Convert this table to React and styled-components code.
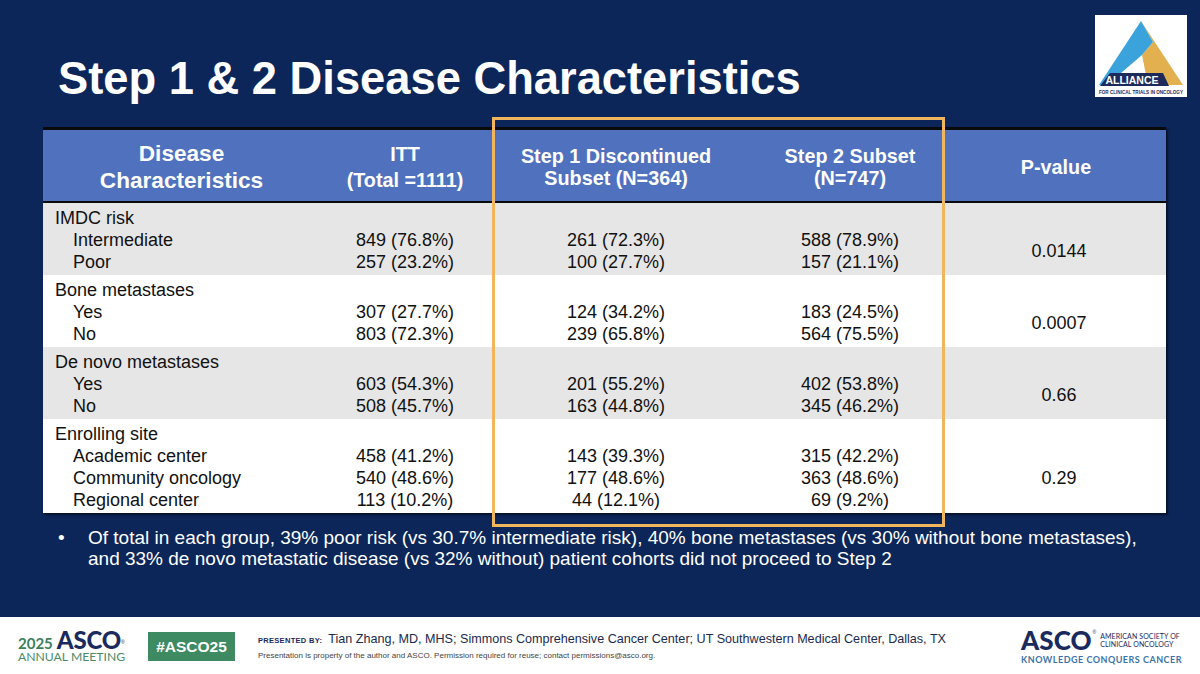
import styled, { createGlobalStyle } from "styled-components";

const GlobalStyle = createGlobalStyle`
  html, body {
    margin: 0;
    padding: 0;
    background: #0c2659;
  }
  body {
    font-family: "Liberation Sans", Arial, sans-serif;
  }
`;

const groups = [
  {
    title: "IMDC risk",
    shade: true,
    p: "0.0144",
    rows: [
      ["Intermediate", "849 (76.8%)", "261 (72.3%)", "588 (78.9%)"],
      ["Poor", "257 (23.2%)", "100 (27.7%)", "157 (21.1%)"],
    ],
  },
  {
    title: "Bone metastases",
    p: "0.0007",
    rows: [
      ["Yes", "307 (27.7%)", "124 (34.2%)", "183 (24.5%)"],
      ["No", "803 (72.3%)", "239 (65.8%)", "564 (75.5%)"],
    ],
  },
  {
    title: "De novo metastases",
    shade: true,
    p: "0.66",
    rows: [
      ["Yes", "603 (54.3%)", "201 (55.2%)", "402 (53.8%)"],
      ["No", "508 (45.7%)", "163 (44.8%)", "345 (46.2%)"],
    ],
  },
  {
    title: "Enrolling site",
    p: "0.29",
    rows: [
      ["Academic center", "458 (41.2%)", "143 (39.3%)", "315 (42.2%)"],
      ["Community oncology", "540 (48.6%)", "177 (48.6%)", "363 (48.6%)"],
      ["Regional center", "113 (10.2%)", "44 (12.1%)", "69 (9.2%)"],
    ],
  },
];

const AllianceLogo = () => (
  <LogoBox>
    <svg width="92" height="82" viewBox="0 0 92 82">
      <rect width="92" height="82" fill="#ffffff" />
      <polygon points="46,6 88,70 53,70 47,40 58,27" fill="#e3b04f" />
      <polygon points="46,6 58,27 47,40 12,70 4,70" fill="#3aa3dc" />
      <polygon points="15,58 68,58 74,71 5,71" fill="#1d2b5c" />
      <text x="37" y="69" fill="#ffffff" fontSize="10.5" fontWeight="700" textAnchor="middle" fontFamily="Liberation Sans, Arial, sans-serif">ALLIANCE</text>
      <text x="4" y="78.5" fill="#1d2b5c" fontSize="4.6" fontWeight="700" textLength="84" lengthAdjust="spacingAndGlyphs" fontFamily="Liberation Sans, Arial, sans-serif">FOR CLINICAL TRIALS IN ONCOLOGY</text>
    </svg>
  </LogoBox>
);

const App = () => {
  return (
    <Slide>
      <GlobalStyle />
      <Main>
        <Header>
          <Title>Step 1 &amp; 2 Disease Characteristics</Title>
          <AllianceLogo />
        </Header>

        <Table>
          <HeadRow>
            <HeadCell $big>Disease<br />Characteristics</HeadCell>
            <HeadCell $lh={26}>ITT<br />(Total =1111)</HeadCell>
            <HeadCell>Step 1 Discontinued<br />Subset (N=364)</HeadCell>
            <HeadCell $shift={6}>Step 2 Subset<br />(N=747)</HeadCell>
            <HeadCell>P-value</HeadCell>
          </HeadRow>
          {groups.map((g) => (
            <Group key={g.title} $shade={g.shade}>
              <GroupTitle>{g.title}</GroupTitle>
              {g.rows.map((r) => [
                <SubLabel key={r[0]}>{r[0]}</SubLabel>,
                <Value key={r[0] + "a"}>{r[1]}</Value>,
                <Value key={r[0] + "b"}>{r[2]}</Value>,
                <Value key={r[0] + "c"} $shift={6}>{r[3]}</Value>,
              ])}
              <PValue $span={g.rows.length}>{g.p}</PValue>
            </Group>
          ))}
        </Table>

        <Bullet>
          <Dot>•</Dot>
          <BulletText>
            Of total in each group, 39% poor risk (vs 30.7% intermediate risk), 40% bone metastases (vs 30% without bone metastases),
            and 33% de novo metastatic disease (vs 32% without) patient cohorts did not proceed to Step 2
          </BulletText>
        </Bullet>

        <Highlight />
      </Main>

      <Footer>
        <MeetingLogo>
          <MeetingTop>
            <Year>2025</Year>
            <AscoSmall>ASCO</AscoSmall>
            <Reg>®</Reg>
          </MeetingTop>
          <MeetingSub>ANNUAL MEETING</MeetingSub>
        </MeetingLogo>
        <Hashtag>#ASCO25</Hashtag>
        <Presenter>
          <PresenterLine>
            <PresentedBy>PRESENTED BY:</PresentedBy>
            <PresenterName>Tian Zhang, MD, MHS; Simmons Comprehensive Cancer Center; UT Southwestern Medical Center, Dallas, TX</PresenterName>
          </PresenterLine>
          <Disclaimer>Presentation is property of the author and ASCO. Permission required for reuse; contact permissions@asco.org.</Disclaimer>
        </Presenter>
        <AscoBrand>
          <AscoTop>
            <AscoBig>ASCO</AscoBig>
            <RegBig>®</RegBig>
            <Society>AMERICAN SOCIETY OF<br />CLINICAL ONCOLOGY</Society>
          </AscoTop>
          <Tagline>KNOWLEDGE CONQUERS CANCER</Tagline>
        </AscoBrand>
      </Footer>
    </Slide>
  );
};

const Slide = styled.div`
  width: 1200px;
  height: 674px;
  display: flex;
  flex-direction: column;
  overflow: hidden;
`;

const Main = styled.div`
  position: relative;
  height: 617px;
  flex-shrink: 0;
  background: #0c2659;
  display: flex;
  flex-direction: column;
`;

const Header = styled.div`
  display: flex;
  justify-content: space-between;
  align-items: flex-start;
  padding: 15px 13px 0 58px;
`;

const Title = styled.h1`
  margin: 39px 0 0;
  color: #ffffff;
  font-size: 45.3px;
  line-height: 50px;
  font-weight: 700;
`;

const LogoBox = styled.div`
  width: 92px;
  height: 82px;
  svg {
    display: block;
  }
`;

const cols = "277px 170px 252px 204px 220px";

const Table = styled.div`
  margin: 23px 0 0 43px;
  width: 1123px;
  border-top: 3px solid #0a0a0a;
  box-shadow: 2px 2px 2px rgba(0, 0, 0, 0.55);
`;

const HeadRow = styled.div`
  display: grid;
  grid-template-columns: ${cols};
  height: 71px;
  background: #4f71be;
  border-bottom: 2px solid #0a0a0a;
  align-items: center;
`;

const HeadCell = styled.div`
  text-align: center;
  color: #ffffff;
  font-weight: 700;
  font-size: ${(p) => (p.$big ? "22.6px" : "19.8px")};
  line-height: ${(p) => (p.$big ? "27px" : `${p.$lh || 22}px`)};
  padding-top: 2px;
  transform: translateX(${(p) => p.$shift || 0}px);
`;

const Group = styled.div`
  display: grid;
  grid-template-columns: ${cols};
  grid-auto-rows: 22px;
  padding: 4px 0 2px;
  background: ${(p) => (p.$shade ? "#e6e6e6" : "#ffffff")};
  font-size: 18px;
  line-height: 22px;
  color: #111111;
`;

const GroupTitle = styled.div`
  grid-column: 1 / -1;
  padding-left: 12px;
`;

const SubLabel = styled.div`
  padding-left: 30px;
`;

const Value = styled.div`
  text-align: center;
  transform: translateX(${(p) => p.$shift || 0}px);
`;

const PValue = styled.div`
  grid-column: 5;
  grid-row: 2 / span ${(p) => p.$span};
  align-self: center;
  text-align: center;
  transform: translateX(3px);
`;

const Highlight = styled.div`
  position: absolute;
  left: 492px;
  top: 117px;
  width: 447px;
  height: 404px;
  border: 3px solid #f1b65c;
  pointer-events: none;
`;

const Bullet = styled.div`
  display: grid;
  grid-template-columns: 30px 1065px;
  margin: 14px 0 0 58px;
  color: #ffffff;
  font-size: 19px;
  line-height: 21px;
`;

const Dot = styled.span``;

const BulletText = styled.p`
  margin: 0;
`;

const Footer = styled.div`
  height: 57px;
  flex-shrink: 0;
  background: #ffffff;
  display: flex;
  align-items: center;
  padding: 0 0 0 18px;
  box-sizing: border-box;
  white-space: nowrap;

  & > * {
    flex-shrink: 0;
  }
`;

const MeetingLogo = styled.div`
  display: flex;
  flex-direction: column;
  width: 112px;
  margin-top: 1px;
`;

const MeetingTop = styled.div`
  display: flex;
  align-items: baseline;
  line-height: 24px;
  height: 22px;
`;

const Year = styled.span`
  font-family: Lato, "Open Sans", sans-serif;
  color: #3b7f5c;
  font-size: 15px;
  font-weight: 700;
  margin-right: 4px;
`;

const AscoSmall = styled.span`
  font-family: Lato, "Open Sans", sans-serif;
  color: #1b2a5e;
  font-size: 24px;
  font-weight: 900;
  letter-spacing: -0.2px;
`;

const Reg = styled.span`
  font-size: 5px;
  color: #1b2a5e;
  align-self: flex-start;
  margin-top: 2px;
`;

const MeetingSub = styled.div`
  font-family: Lato, "Open Sans", sans-serif;
  color: #4c8a6a;
  font-size: 12.2px;
  line-height: 14px;
  letter-spacing: 0;
`;

const Hashtag = styled.div`
  width: 87px;
  height: 29px;
  margin: 2px 0 0 18px;
  background: #3e8a62;
  color: #ffffff;
  font-weight: 700;
  font-size: 15.5px;
  display: flex;
  align-items: center;
  justify-content: center;
`;

const Presenter = styled.div`
  margin-left: 23px;
  display: flex;
  flex-direction: column;
  gap: 5px;
  margin-top: 1px;
`;

const PresenterLine = styled.div`
  display: flex;
  align-items: baseline;
  gap: 6px;
`;

const PresentedBy = styled.span`
  font-size: 7.5px;
  font-weight: 700;
  color: #1b2a5e;
  letter-spacing: 0.3px;
`;

const PresenterName = styled.span`
  font-size: 12.6px;
  color: #1b2a4e;
`;

const Disclaimer = styled.div`
  font-size: 8px;
  color: #444444;
`;

const AscoBrand = styled.div`
  margin-left: auto;
  margin-right: 18px;
  display: flex;
  flex-direction: column;
  margin-top: 1px;
`;

const AscoTop = styled.div`
  display: flex;
  align-items: center;
`;

const AscoBig = styled.span`
  font-family: Lato, "Open Sans", sans-serif;
  font-weight: 900;
  font-size: 26px;
  line-height: 24px;
  color: #1b2a5e;
`;

const RegBig = styled.span`
  font-size: 5px;
  color: #1b2a5e;
  align-self: flex-start;
  margin: 1px 4px 0 1px;
`;

const Society = styled.span`
  font-family: Lato, "Open Sans", sans-serif;
  font-size: 7px;
  line-height: 8px;
  color: #1b2a5e;
  letter-spacing: 0.1px;
`;

const Tagline = styled.div`
  font-family: Lato, "Open Sans", sans-serif;
  font-size: 9px;
  font-weight: 700;
  color: #3d73a8;
  letter-spacing: 0.5px;
  margin-top: 2px;
`;

export default App;
